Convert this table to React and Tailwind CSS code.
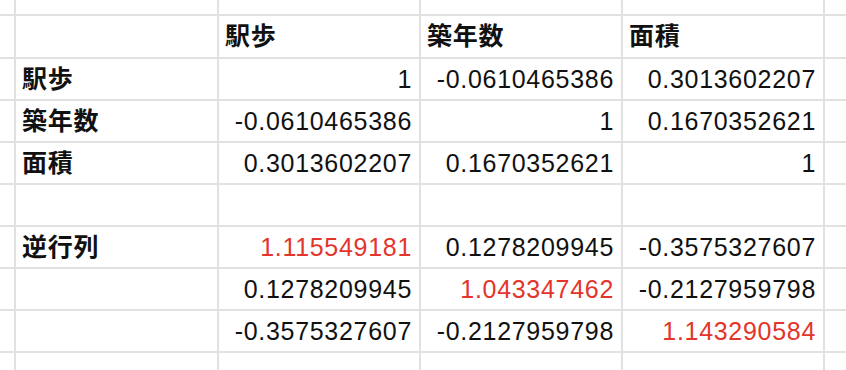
const COLS = ['w-[16px]', 'w-[203px]', 'w-[202px]', 'w-[202px]', 'w-[202px]', 'flex-1'];

const rows = [
  { h: 'h-[16px]', cells: [] },
  { h: 'h-[43px]', cells: [null, null, { t: '駅歩', b: true }, { t: '築年数', b: true }, { t: '面積', b: true }] },
  { h: 'h-[42px]', cells: [null, { t: '駅歩', b: true }, { t: '1', r: true }, { t: '-0.0610465386', r: true }, { t: '0.3013602207', r: true }] },
  { h: 'h-[42px]', cells: [null, { t: '築年数', b: true }, { t: '-0.0610465386', r: true }, { t: '1', r: true }, { t: '0.1670352621', r: true }] },
  { h: 'h-[42px]', cells: [null, { t: '面積', b: true }, { t: '0.3013602207', r: true }, { t: '0.1670352621', r: true }, { t: '1', r: true }] },
  { h: 'h-[42px]', cells: [] },
  { h: 'h-[42px]', cells: [null, { t: '逆行列', b: true }, { t: '1.115549181', r: true, red: true }, { t: '0.1278209945', r: true }, { t: '-0.3575327607', r: true }] },
  { h: 'h-[42px]', cells: [null, null, { t: '0.1278209945', r: true }, { t: '1.043347462', r: true, red: true }, { t: '-0.2127959798', r: true }] },
  { h: 'h-[42px]', cells: [null, null, { t: '-0.3575327607', r: true }, { t: '-0.2127959798', r: true }, { t: '1.143290584', r: true, red: true }] },
  { h: 'h-[20px]', cells: [], last: true },
];

function Cell({ width, cell, last, lastCol }) {
  const align = cell && cell.r ? 'justify-end pr-[7px]' : 'justify-start pl-[6px]';
  return (
    <div
      className={`${width} shrink-0 flex items-center overflow-hidden border-[#e1e1e1] ${lastCol ? '' : 'border-r-2'} ${last ? '' : 'border-b-2'} ${align}`}
    >
      {cell && (
        <span
          className={`whitespace-nowrap text-[25px] leading-none tracking-[0.7px] ${cell.b ? 'font-bold' : ''} ${cell.red ? 'text-[#e3352b]' : 'text-[#111]'}`}
        >
          {cell.t}
        </span>
      )}
    </div>
  );
}

export default function App() {
  return (
    <div
      className="w-[846px] h-[370px] overflow-hidden bg-white"
      style={{ fontFamily: '"Liberation Sans", Arial, "Noto Sans CJK JP", sans-serif' }}
    >
      {rows.map((row, i) => (
        <div key={i} className={`flex ${row.h}`}>
          {COLS.map((w, j) => (
            <Cell key={j} width={w} cell={row.cells[j]} last={row.last} lastCol={j === COLS.length - 1} />
          ))}
        </div>
      ))}
    </div>
  );
}
